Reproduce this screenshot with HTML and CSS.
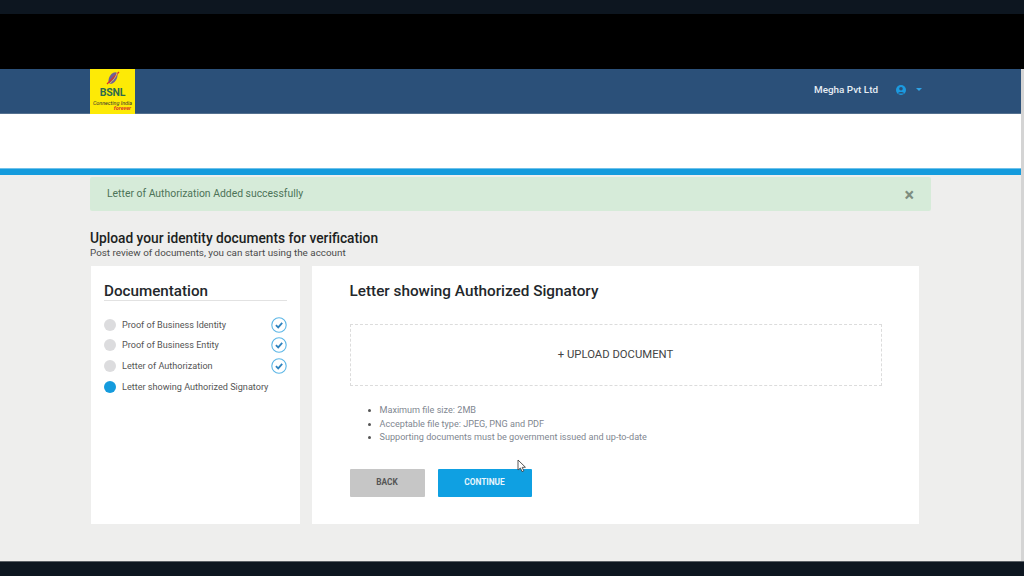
FILE: index.html
```html
<!DOCTYPE html>
<html lang="en">
<head>
<meta charset="utf-8">
<title>Upload documents</title>
<link rel="stylesheet" href="styles.css">
</head>
<body>
<div class="video-top"></div>
<div class="video-black"></div>
<div class="viewport">
  <div class="page">
    <header class="header">
      <div class="logo">
        <svg class="logo-mark" viewBox="0 0 16 14" width="16" height="14" aria-hidden="true">
          <ellipse cx="8" cy="7" rx="3.6" ry="6.4" transform="rotate(32 8 7)" fill="#6f5f96"/>
          <path d="M2 13 L14 1" stroke="#d8322a" stroke-width="1.2"/>
          <path d="M5 12 C8 10 11 6 12 2" stroke="#e8d060" stroke-width="0.8" fill="none"/>
        </svg>
        <span class="logo-name">BSNL</span>
        <span class="logo-tag">Connecting India</span>
        <span class="logo-sub">forever</span>
      </div>
      <div class="account">
        <span class="account-name">Megha Pvt Ltd</span>
        <svg class="avatar" viewBox="0 0 10 10" width="10" height="10" aria-hidden="true">
          <circle cx="5" cy="5" r="5" fill="#1b9ae0"/>
          <circle cx="5" cy="3.8" r="1.8" fill="#2b5079"/>
          <path d="M1.8 8.4 C2.4 6.4 7.6 6.4 8.2 8.4 Z" fill="#2b5079"/>
        </svg>
        <span class="caret"></span>
      </div>
    </header>
    <div class="subnav"></div>
    <div class="accent"></div>
    <main class="content">
      <div class="alert">
        <span>Letter of Authorization Added successfully</span>
        <span class="alert-close">×</span>
      </div>
      <h1 class="title">Upload your identity documents for verification</h1>
      <p class="subtitle">Post review of documents, you can start using the account</p>
      <div class="cards">
        <aside class="card side">
          <h2 class="side-title">Documentation</h2>
          <ul class="steps">
            <li class="step"><span class="dot"></span><span class="step-label">Proof of Business Identity</span>
              <svg class="check" viewBox="0 0 16 16" width="16" height="16" aria-hidden="true"><circle cx="8" cy="8" r="7.2" fill="#fff" stroke="#5cb6e6" stroke-width="1.1"/><path d="M4.9 8.2 L7.2 10.4 L11.2 5.9" fill="none" stroke="#2f82bd" stroke-width="1.8"/></svg></li>
            <li class="step"><span class="dot"></span><span class="step-label">Proof of Business Entity</span>
              <svg class="check" viewBox="0 0 16 16" width="16" height="16" aria-hidden="true"><circle cx="8" cy="8" r="7.2" fill="#fff" stroke="#5cb6e6" stroke-width="1.1"/><path d="M4.9 8.2 L7.2 10.4 L11.2 5.9" fill="none" stroke="#2f82bd" stroke-width="1.8"/></svg></li>
            <li class="step"><span class="dot"></span><span class="step-label">Letter of Authorization</span>
              <svg class="check" viewBox="0 0 16 16" width="16" height="16" aria-hidden="true"><circle cx="8" cy="8" r="7.2" fill="#fff" stroke="#5cb6e6" stroke-width="1.1"/><path d="M4.9 8.2 L7.2 10.4 L11.2 5.9" fill="none" stroke="#2f82bd" stroke-width="1.8"/></svg></li>
            <li class="step"><span class="dot dot-active"></span><span class="step-label">Letter showing Authorized Signatory</span></li>
          </ul>
        </aside>
        <section class="card panel">
          <h2 class="panel-title">Letter showing Authorized Signatory</h2>
          <div class="dropzone">+ UPLOAD DOCUMENT</div>
          <ul class="rules">
            <li>Maximum file size: 2MB</li>
            <li>Acceptable file type: JPEG, PNG and PDF</li>
            <li>Supporting documents must be government issued and up-to-date</li>
          </ul>
          <div class="actions">
            <button class="btn btn-back">BACK</button>
            <button class="btn btn-continue">CONTINUE</button>
            <svg class="cursor" viewBox="0 0 10 14" width="10" height="14" aria-hidden="true"><path d="M1 1 L1 11 L3.4 9 L5 12.6 L6.8 11.8 L5.2 8.4 L8.4 8.2 Z" fill="#fff" stroke="#444" stroke-width="0.9"/></svg>
          </div>
        </section>
      </div>
    </main>
  </div>
  <div class="scrollbar"></div>
</div>
<div class="video-bottom"></div>
</body>
</html>
```
FILE: styles.css
```css
* { box-sizing: border-box; }
html, body { margin: 0; height: 100%; }
body {
  width: 1024px;
  height: 576px;
  overflow: hidden;
  display: flex;
  flex-direction: column;
  font-family: Roboto, "Liberation Sans", sans-serif;
  background: #000;
  color: #333;
}
.video-top { height: 14px; background: #0d1620; }
.video-black { height: 55px; background: #000; }
.video-bottom { height: 15px; background: #0d1620; border-top: 1px solid #5a6066; }
.viewport { flex: 1; display: flex; min-height: 0; }
.page { flex: 1; display: flex; flex-direction: column; min-width: 0; }
.scrollbar { width: 3px; background: #d4d4d4; }

.header {
  height: 45px;
  background: #2b5079;
  border-bottom: 1px solid #54708f;
  display: flex;
  justify-content: space-between;
  padding: 0 99px 0 90px;
}
.logo {
  width: 45px;
  height: 45px;
  background: #fdea06;
  display: flex;
  flex-direction: column;
  align-items: center;
  position: relative;
  padding-top: 2px;
  color: #2f6a4d;
}
.logo-mark { flex: none; }
.logo-name { font-size: 10.5px; line-height: 10px; font-weight: 700; margin-top: 3px; letter-spacing: -0.2px; }
.logo-tag { font-size: 5.4px; line-height: 6px; font-style: italic; color: #333; margin-top: 2px; white-space: nowrap; }
.logo-sub { position: absolute; right: 4px; bottom: 3px; font-size: 5.5px; line-height: 5px; font-style: italic; font-weight: 700; color: #d8322a; }
.account { display: flex; align-items: center; height: 41px; }
.account-name { font-size: 9.9px; font-weight: 500; color: #e6edf4; }
.avatar { margin-left: 18px; }
.caret {
  margin-left: 10px;
  width: 0;
  height: 0;
  border-left: 3px solid transparent;
  border-right: 3px solid transparent;
  border-top: 3px solid #2ea3e6;
}
.subnav { height: 54px; background: #fff; }
.accent { height: 7px; background: #149bdd; box-shadow: inset 0 1px 0 #6fc1ea; }

.content {
  flex: 1;
  background: #eeeeed;
  padding: 2px 90px 0;
  min-height: 0;
}
.alert {
  width: 841px;
  height: 34px;
  background: #d6ebd9;
  color: #4d7358;
  font-size: 10.4px;
  padding: 0 17px 2px 17px;
  display: flex;
  justify-content: space-between;
  align-items: center;
  border-radius: 2px;
}
.alert-close { font-size: 18px; font-weight: 700; color: #7d8d80; line-height: 1; padding: 3px 0 0; }
.title { margin: 19px 0 0; font-size: 13.75px; line-height: 16px; font-weight: 500; color: #1c1f22; }
.subtitle { margin: 0; font-size: 9.85px; line-height: 13px; color: #4a4a4a; }
.cards { display: flex; gap: 12px; margin: 7px 0 0 1px; height: 258px; }
.card { background: #fff; }
.side { width: 209px; padding: 16px 13px 0 13px; }
.side-title {
  margin: 0;
  font-size: 15.2px;
  line-height: 18px;
  font-weight: 500;
  color: #23272b;
  padding-bottom: 0;
  border-bottom: 1px solid #e2e2e2;
}
.steps { list-style: none; margin: 13.5px 0 0; padding: 0; }
.step { height: 20.6px; display: flex; align-items: center; }
.dot { width: 12px; height: 12px; border-radius: 50%; background: #dcdcde; flex: none; }
.dot-active { background: #149bdd; }
.step-label { margin-left: 6px; font-size: 9.1px; color: #555; flex: 1; white-space: nowrap; }
.check { flex: none; }
.panel { width: 607px; padding: 16px 37px 0 37.5px; }
.panel-title { margin: 0; font-size: 15.3px; line-height: 18px; font-weight: 500; color: #23272b; }
.dropzone {
  margin-top: 24px;
  height: 62px;
  width: 532px;
  border: 1px dashed #dcdcdc;
  display: flex;
  align-items: center;
  justify-content: center;
  font-size: 11.3px;
  color: #444;
  padding-bottom: 2px;
}
.rules { margin: 18px 0 0; padding: 0 0 0 30px; font-size: 9.1px; line-height: 13.7px; color: #7f8791; }
.rules li::marker { color: #555; }
.actions { display: flex; gap: 13px; margin-top: 24px; position: relative; }
.btn {
  height: 28px;
  border: 0;
  border-radius: 1px;
  font-family: inherit;
  font-size: 8.3px;
  font-weight: 700;
  padding: 0 0 2px;
}
.btn-back { width: 75px; background: #c6c6c6; color: #555; }
.btn-continue { width: 94px; background: #0fa0e2; color: #e8f6fd; }
.cursor { position: absolute; left: 167px; top: -10px; }
```
